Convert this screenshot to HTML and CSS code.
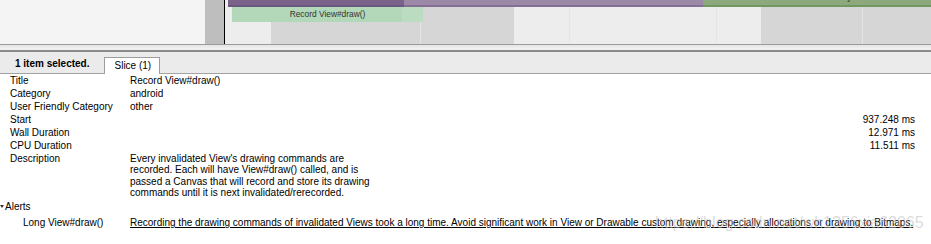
FILE: index.html
```html
<!DOCTYPE html>
<html lang="en">
<head>
    <meta charset="UTF-8">
    <title>Slice details</title>
    <link rel="stylesheet" href="styles.css">
</head>
<body>
    <div class="top">
        <div class="sidebar"></div>
        <div class="gutter"></div>
        <div class="timeline">
            <div class="col light w46"></div>
            <div class="col dark w243"><span class="tick t149"></span></div>
            <div class="col light w247"><span class="tick t55"></span><span class="tick t202"></span></div>
            <div class="col dark w169"><span class="tick t101"></span></div>

            <!-- slices drawn on the track canvas -->
            <div class="slice purple"><span class="cut">DrawFrame</span></div>
            <div class="slice purple-hi"></div>
            <div class="slice green"><span class="cut">syncFrame</span></div>
            <div class="slice record">Record View#draw()</div>
            <div class="slice record-hi"></div>
        </div>
    </div>

    <div class="splitter"></div>

    <div class="tabbar">
        <span class="sel-label">1 item selected.</span>
        <span class="tab">Slice (1)</span>
    </div>

    <div class="panel">
        <div class="props">
            <div>Title</div><div>Record View#draw()</div>
            <div>Category</div><div>android</div>
            <div>User Friendly Category</div><div>other</div>
            <div>Start</div><div class="num">937.248 ms</div>
            <div>Wall Duration</div><div class="num">12.971 ms</div>
            <div>CPU Duration</div><div class="num">11.511 ms</div>
            <div>Description</div>
            <div class="desc">Every invalidated View's drawing commands are<br>recorded. Each will have View#draw() called, and is<br>passed a Canvas that will record and store its drawing<br>commands until it is next invalidated/rerecorded.</div>
        </div>

        <div class="alerts-head"><span class="caret"></span>Alerts</div>
        <div class="alert-row">
            <div>Long View#draw()</div>
            <div><a href="#" class="alert-link">Recording the drawing commands of invalidated Views took a long time. Avoid significant work in View or Drawable custom drawing, especially allocations or drawing to Bitmaps.</a></div>
        </div>
    </div>

    <div class="watermark">https://blog.csdn.net/wh1356xia62065</div>
</body>
</html>
```

FILE: styles.css
```css
body {
    margin: 0;
    font-family: "Liberation Sans", Arial, sans-serif;
    font-size: 10px;
    color: #000;
    background: #fff;
    position: relative;
    overflow: hidden;
    height: 244px;
}

/* Parte de arriba: pistas */
.top {
    display: flex;
    height: 44px;
    border-bottom: 1px solid #9b9b9b;
}
.sidebar {
    width: 205px;
    background: #f4f4f4;
}
.gutter {
    width: 19px;
    background: #bebebe;
    border-right: 1px solid #000;
}
.timeline {
    flex: 1;
    display: flex;
    position: relative;
    overflow: hidden;
}
.col {
    position: relative;
    height: 100%;
}
.col.light { background: #ededed; }
.col.dark { background: #d6d6d6; }
.w46 { width: 46px; }
.w243 { width: 243px; }
.w247 { width: 247px; }
.w169 { flex: 1; }
.tick {
    position: absolute;
    top: 0;
    bottom: 0;
    width: 1px;
    background: rgba(255, 255, 255, 0.35);
}
.col.light .tick { background: rgba(0, 0, 0, 0.03); }
.t149 { left: 149px; }
.t55 { left: 55px; }
.t202 { left: 202px; }
.t101 { left: 101px; }

.slice {
    position: absolute;
    overflow: hidden;
}
.purple {
    left: 3px;
    width: 475px;
    top: 0;
    height: 5px;
    background: #9c88a7;
    border-bottom: 2px solid #846e93;
}
.purple-hi {
    left: 3px;
    width: 176px;
    top: 0;
    height: 5px;
    background: #7b628a;
    border-bottom: 2px solid #6b5680;
}
.green {
    left: 478px;
    right: 0;
    top: 0;
    height: 5px;
    background: #8ca87c;
    border-bottom: 2px solid #72985f;
}
.cut {
    position: absolute;
    top: -8px;
    font-size: 8.4px;
    color: #222;
    line-height: 10px;
}
.purple .cut { left: 226px; }
.green .cut { left: 140px; }
.record {
    left: 7px;
    width: 191px;
    top: 7px;
    height: 15px;
    background: #b2d8b9;
    font-size: 8.4px;
    line-height: 15px;
    text-align: center;
    color: #333;
}
.record-hi {
    left: 177px;
    width: 21px;
    top: 7px;
    height: 15px;
    background: rgba(255, 255, 255, 0.12);
}
.purple-hi + .green { z-index: 1; }

/* Separador */
.splitter {
    height: 5px;
    background: linear-gradient(#e6e6e6, #f2f2f2);
    border-bottom: 2px solid #8a8a8a;
}

/* Pestañas */
.tabbar {
    display: flex;
    align-items: flex-end;
    height: 21px;
    background: #ebebeb;
    border-bottom: 1px solid #a3a3a3;
}
.sel-label {
    font-weight: bold;
    padding: 0 15px;
    line-height: 13px;
    margin-bottom: 3px;
}
.tab {
    height: 16px;
    line-height: 15px;
    padding: 0 8px 0 9px;
    background: #fff;
    border: 1px solid #9c9c9c;
    border-bottom: none;
    margin-bottom: -1px;
}

/* Propiedades */
.props {
    display: grid;
    grid-template-columns: 120px 1fr;
    padding: 0 16px 0 10px;
    line-height: 13px;
}
.num {
    text-align: right;
}
.desc {
    line-height: 11.3px;
    padding-top: 1px;
}

.alerts-head {
    line-height: 13px;
    margin-top: 2px;
    display: flex;
    align-items: center;
}
.caret {
    width: 0;
    height: 0;
    border-left: 2.5px solid transparent;
    border-right: 2.5px solid transparent;
    border-top: 3px solid #333;
    margin: 0 1px 0 0;
}
.alert-row {
    display: grid;
    grid-template-columns: 107px 1fr;
    padding-left: 23px;
    margin-top: 3px;
    line-height: 13px;
}
.alert-link {
    color: #000;
    text-decoration: underline;
}

.watermark {
    position: absolute;
    left: 655px;
    top: 214px;
    font-size: 16px;
    color: rgba(190, 190, 190, 0.55);
    pointer-events: none;
    white-space: nowrap;
}
```
